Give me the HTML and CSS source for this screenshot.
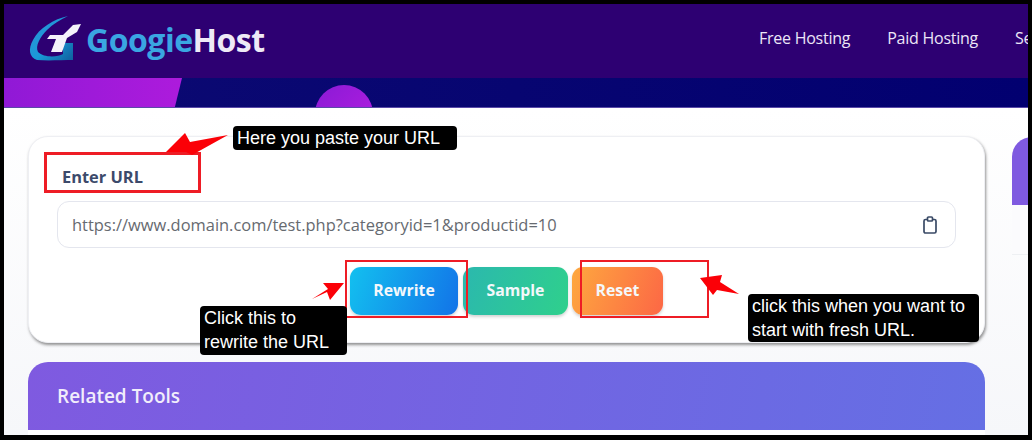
FILE: index.html
```html
<!DOCTYPE html>
<html lang="en">
<head>
<meta charset="utf-8">
<title>GoogieHost URL Rewriter</title>
<link rel="stylesheet" href="styles.css">
</head>
<body>
<div class="frame">
  <header class="topbar">
    <a class="brand">
      <svg class="logo" width="58" height="50" viewBox="0 0 58 50">
        <defs>
          <linearGradient id="lg" x1="0" y1="0" x2="1" y2="1">
            <stop offset="0" stop-color="#2f8fd6"/>
            <stop offset="0.55" stop-color="#1a9ad8"/>
            <stop offset="1" stop-color="#0f5f9e"/>
          </linearGradient>
        </defs>
        <path d="M40 2 C26 5 11 14 5 26 C0 35 1 43 9 46 C20 47 34 46 45 46 L45 29 L35 29 L35 40 C30 43 16 44 10 38 C7 32 12 23 19 16 C25 10 32 6 40 2 Z" fill="url(#lg)"/>
        <path d="M53 10 L49 18 L39 24 L34 38 L23 38 L28 25 L19 25 L22 21 L35 21 L45 11 Z" fill="#f4f2fa"/>
      </svg>
      <span class="brand-name"><span class="g1">Googie</span><span class="g2">Host</span></span>
    </a>
    <nav class="nav">
      <a>Free Hosting</a>
      <a>Paid Hosting</a>
      <a>Services</a>
    </nav>
  </header>
  <div class="strip">
    <div class="strip-purple"></div>
    <div class="strip-circle"></div>
  </div>
  <main class="content">
    <div class="col-main">
      <section class="card">
        <label class="field-label">Enter URL</label>
        <div class="field">
          <span class="field-text">https://www.domain.com/test.php?categoryid=1&amp;productid=10</span>
          <svg class="clip" width="16" height="18" viewBox="0 0 16 18" fill="none" stroke="#3a4a66" stroke-width="1.7">
            <rect x="2" y="3.5" width="12" height="13.5" rx="1.5"/>
            <rect x="5.5" y="1" width="5" height="4" rx="1" fill="#fff"/>
          </svg>
        </div>
        <div class="actions">
          <button class="btn btn-blue">Rewrite</button>
          <button class="btn btn-green">Sample</button>
          <button class="btn btn-orange">Reset</button>
        </div>
      </section>
      <section class="related">
        <div class="related-head"><h2>Related Tools</h2></div>
        <div class="related-body"></div>
      </section>
    </div>
    <aside class="side">
      <div class="side-head"></div>
      <div class="side-body"></div>
    </aside>
  </main>

  <div class="mark mark-label"></div>
  <div class="mark mark-rewrite"></div>
  <div class="mark mark-reset"></div>

  <div class="note note-1">Here you paste your URL</div>
  <div class="note note-2">Click this to<br>rewrite the URL</div>
  <div class="note note-3">click this when you want to<br>start with fresh URL.</div>

  <svg class="arrow arrow-1" width="72" height="32" viewBox="0 0 72 32"><path d="M2 24 L21 5 L26 14 L64 7 L28 27 L22 24 Z" fill="#fb0007"/></svg>
  <svg class="arrow arrow-2" width="36" height="24" viewBox="0 0 36 24"><path d="M1 18 L17 8 L12 2 L33 2 L19 19 L16 11 Z" fill="#fb0007"/></svg>
  <svg class="arrow arrow-3" width="42" height="26" viewBox="0 0 42 26"><path d="M1 3 L23 0 L21 7 L40 19 L18 15 L14 20 Z" fill="#fb0007"/></svg>
</div>
</body>
</html>
```
FILE: styles.css
```css
* { box-sizing: border-box; }
html, body { margin: 0; padding: 0; }
body { width: 1032px; height: 440px; overflow: hidden; background: #fff; font-family: "Open Sans", sans-serif; }

.frame {
  position: relative;
  width: 1032px;
  height: 440px;
  border: 4px solid #000;
  border-bottom-width: 5px;
  overflow: hidden;
  background: #f8f9fb;
}

.topbar {
  height: 74px;
  background: #2d0072;
  display: flex;
  align-items: flex-start;
  justify-content: space-between;
}
.brand { display: flex; align-items: center; padding: 10px 0 0 24px; }
.logo { display: block; }
.brand-name {
  font-family: "Open Sans", sans-serif;
  font-weight: 700;
  font-size: 32px;
  letter-spacing: -0.5px;
  line-height: 40px;
  margin-top: 2px;
}
.g1 { color: #3aa6e2; }
.g2 { color: #eeeaf6; }
.nav { display: flex; gap: 37px; width: 269px; flex: none; padding-top: 23px; white-space: nowrap; overflow: hidden; }
.nav a { color: #ece6f7; font-size: 16px; line-height: 22px; letter-spacing: -0.25px; }

.strip {
  position: relative;
  height: 30px;
  background: linear-gradient(90deg, #0c0a72 0%, #020070 100%);
  overflow: hidden;
  border-bottom: 1px solid #5a4aa8;
}
.strip-purple {
  position: absolute;
  left: 0; top: 0; bottom: 0;
  width: 178px;
  background: linear-gradient(90deg, #9019d6, #ad1bdc);
  clip-path: polygon(0 0, 100% 0, 96% 100%, 0 100%);
}
.strip-circle {
  position: absolute;
  left: 311px; top: 7px;
  width: 58px; height: 58px;
  border-radius: 50%;
  background: linear-gradient(135deg, #8a1ad6, #b61ee0);
}

.content {
  display: flex;
  gap: 27px;
  padding: 28px 0 0 24px;
  height: 327px;
  background: linear-gradient(180deg, #fff 0%, #f6f7fa 100%);
}
.col-main { width: 957px; flex: none; display: flex; flex-direction: column; gap: 19px; }

.card {
  flex: none;
  height: 207px;
  background: #fff;
  border: 1px solid #eeeff3;
  border-radius: 20px;
  box-shadow: 1px 2px 3px rgba(60, 60, 60, 0.55);
  padding: 29px 28px 0 28px;
}
.field-label {
  display: block;
  font-size: 16.4px;
  line-height: 22px;
  font-weight: 700;
  color: #3c4a6b;
  padding-left: 5px;
}
.field {
  margin-top: 13px;
  height: 47px;
  border: 1px solid #e4e6ee;
  border-radius: 12px;
  display: flex;
  align-items: center;
  justify-content: space-between;
  padding: 0 17px 0 14px;
  background: #fff;
}
.field-text { font-size: 16.45px; line-height: 44px; color: #666a70; }
.clip { display: block; }

.actions { display: flex; justify-content: flex-start; padding: 19px 0 0 293px; gap: 5px; }
.btn {
  height: 48px;
  border: 0;
  border-radius: 11px;
  color: #f4f8fb;
  font-family: "Open Sans", sans-serif;
  font-size: 15.8px;
  font-weight: 700;
  padding: 0 0 2px;
  box-shadow: 0 2px 3px rgba(80, 80, 80, 0.25);
}
.btn-blue { width: 108px; background: linear-gradient(110deg, #13c0ef, #1273e8); }
.btn-green { width: 105px; background: linear-gradient(110deg, #2bb8ae, #2fd08c); }
.btn-orange { width: 91px; margin-left: -1px; background: linear-gradient(110deg, #fea83f, #fc6745); }

.related { flex: none; }
.related-head {
  height: 68px;
  border-radius: 20px 20px 0 0;
  background: linear-gradient(100deg, #7f5ae0, #656fe4);
  padding: 22px 29px;
}
.related-body { height: 5px; background: #fff; }
.related h2 {
  margin: 0;
  font-size: 19px;
  line-height: 25px;
  font-weight: 600;
  color: #f1edfb;
}

.side { width: 60px; flex: none; }
.side-head { height: 68px; margin-top: 1px; border-radius: 20px 0 0 0; background: #7f5ae0; }
.side-body { height: 50px; background: #fbfbfd; border-bottom: 1px solid #eef0f3; }

.mark { position: absolute; border: 2px solid #ee1c25; }
.mark-label { left: 40px; top: 148px; width: 157px; height: 41px; border-width: 3px; }
.mark-rewrite { left: 341px; top: 256px; width: 123px; height: 58px; }
.mark-reset { left: 576px; top: 256px; width: 129px; height: 58px; }

.note {
  position: absolute;
  background: #000;
  color: #fff;
  font-family: "Liberation Sans", Arial, sans-serif;
  font-size: 18px;
  line-height: 24px;
  border-radius: 4px;
  padding: 0 4px;
  white-space: nowrap;
}
.note-1 { left: 229px; top: 122px; width: 224px; height: 24px; }
.note-2 { left: 196px; top: 302px; width: 147px; height: 49px; }
.note-3 { left: 744px; top: 290px; width: 231px; height: 48px; }

.arrow { position: absolute; display: block; }
.arrow-1 { left: 160px; top: 124px; }
.arrow-2 { left: 307px; top: 277px; }
.arrow-3 { left: 695px; top: 271px; }
```
